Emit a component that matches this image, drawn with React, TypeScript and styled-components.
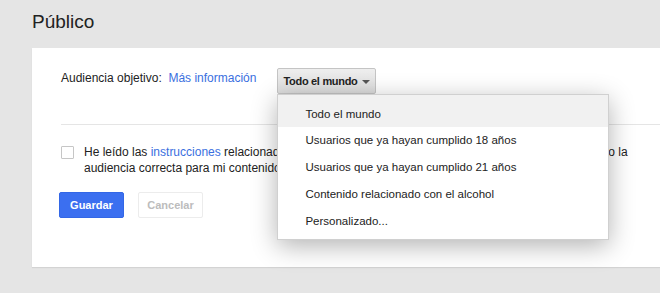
import React from "react";
import styled, { createGlobalStyle } from "styled-components";

const Global = createGlobalStyle`
  body {
    margin: 0;
    background: #e5e5e5;
    font-family: Arial, "Liberation Sans", sans-serif;
    color: #333;
  }
`;

const Page = styled.div`
  width: 660px;
  height: 293px;
  overflow: hidden;
  padding: 10px 0 0 32px;
  box-sizing: border-box;
`;

const Title = styled.h1`
  margin: 0 0 14px 0;
  font-size: 19px;
  font-weight: normal;
  color: #222;
  line-height: 24px;
`;

const Card = styled.div`
  background: #fff;
  height: 219px;
  padding: 20px 0 0 29px;
  box-sizing: border-box;
  box-shadow: 0 1px 1px rgba(0, 0, 0, 0.08);
`;

const TopRow = styled.div`
  display: flex;
  align-items: flex-start;
  height: 56px;
`;

const Label = styled.span`
  font-size: 12px;
  line-height: 16px;
  margin-top: 2px;
  color: #222;
`;

const Link = styled.a`
  color: #3a6fe0;
  text-decoration: none;
  cursor: pointer;
`;

const DropWrap = styled.div`
  position: relative;
  margin-left: 21px;
`;

const DropButton = styled.button`
  display: flex;
  align-items: center;
  gap: 4px;
  height: 26px;
  padding: 0 5px 0 5px;
  border: 1px solid #c4c4c4;
  border-radius: 2px;
  background: linear-gradient(#eeeeee, #dcdcdc);
  font-family: inherit;
  font-size: 11px;
  font-weight: bold;
  letter-spacing: -0.3px;
  color: #222;
`;

const Caret = styled.span`
  width: 0;
  height: 0;
  border-left: 4px solid transparent;
  border-right: 4px solid transparent;
  border-top: 4px solid #555;
  margin-top: 1px;
`;

const Menu = styled.ul`
  position: absolute;
  top: 26px;
  left: 0;
  width: 330px;
  margin: 0;
  padding: 0 0 4px 0;
  list-style: none;
  background: #fff;
  border: 1px solid #d0d0d0;
  box-shadow: 0 6px 24px rgba(0, 0, 0, 0.3);
  z-index: 5;
`;

const MenuItem = styled.li<{ $active?: boolean }>`
  height: 27px;
  line-height: 27px;
  padding-left: 27px;
  font-size: 11.5px;
  color: #222;
  background: ${(p) => (p.$active ? "#f1f1f1" : "transparent")};
  &:first-child {
    height: 32px;
    line-height: 38px;
  }
`;

const Divider = styled.div`
  height: 1px;
  background: #e5e5e5;
  margin-bottom: 19px;
`;

const CheckRow = styled.div`
  display: flex;
  align-items: flex-start;
  gap: 10px;
`;

const Box = styled.span`
  width: 11px;
  height: 11px;
  border: 1px solid #c6c6c6;
  border-radius: 1px;
  margin-top: 2px;
  flex: none;
`;

const CheckText = styled.p`
  margin: 0;
  font-size: 12px;
  line-height: 16px;
  color: #222;
  white-space: nowrap;
`;

const Buttons = styled.div`
  display: flex;
  gap: 14px;
  margin: 16px 0 0 -2px;
`;

const Button = styled.button<{ $primary?: boolean }>`
  width: 65px;
  height: 26px;
  border-radius: 2px;
  font-family: inherit;
  font-size: 11px;
  font-weight: bold;
  border: 1px solid ${(p) => (p.$primary ? "#3367e6" : "#ececec")};
  background: ${(p) => (p.$primary ? "#3b6ff0" : "#fff")};
  color: ${(p) => (p.$primary ? "#fff" : "#bcbcbc")};
`;

const options = [
  "Todo el mundo",
  "Usuarios que ya hayan cumplido 18 años",
  "Usuarios que ya hayan cumplido 21 años",
  "Contenido relacionado con el alcohol",
  "Personalizado...",
];

export default function App() {
  return (
    <Page>
      <Global />
      <Title>Público</Title>
      <Card>
        <TopRow>
          <Label>
            Audiencia objetivo:&nbsp;&nbsp;<Link>Más información</Link>
          </Label>
          <DropWrap>
            <DropButton>
              Todo el mundo <Caret />
            </DropButton>
            <Menu>
              {options.map((o, i) => (
                <MenuItem key={o} $active={i === 0}>
                  {o}
                </MenuItem>
              ))}
            </Menu>
          </DropWrap>
        </TopRow>
        <Divider />
        <CheckRow>
          <Box />
          <CheckText>
            He leído las <Link>instrucciones</Link> relacionadas con la audiencia objetivo y confirmo que ya he seleccionado la
            <br />
            audiencia correcta para mi contenido
          </CheckText>
        </CheckRow>
        <Buttons>
          <Button $primary>Guardar</Button>
          <Button>Cancelar</Button>
        </Buttons>
      </Card>
    </Page>
  );
}
